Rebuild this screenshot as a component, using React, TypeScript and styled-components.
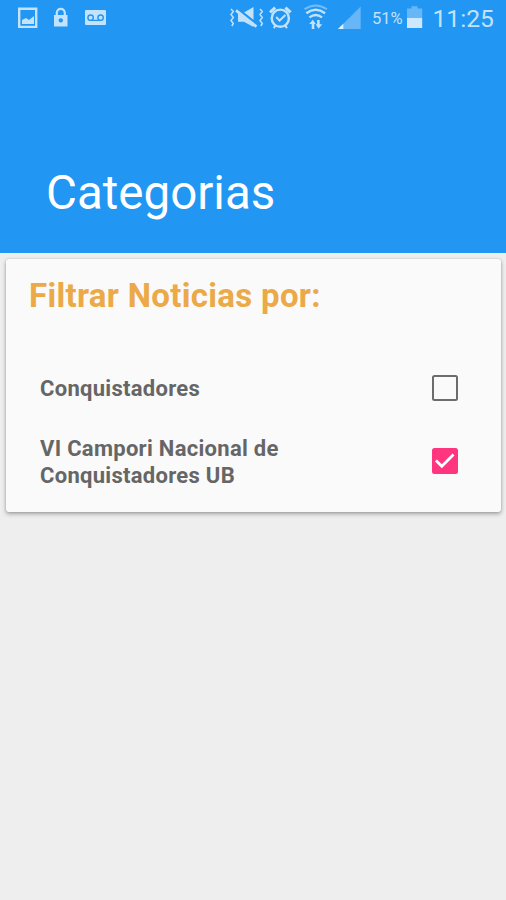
import React, { useState } from "react";
import styled, { createGlobalStyle } from "styled-components";

const GlobalStyle = createGlobalStyle`
  * { box-sizing: border-box; }
  body { margin: 0; background: #eeeeee; font-family: Roboto, sans-serif; }
`;

const Screen = styled.main`
  min-height: 900px;
  background: #eeeeee;
  overflow: hidden;
`;

const Header = styled.header`
  height: 253px;
  background: #2196f3;
  display: flex;
  flex-direction: column;
  justify-content: space-between;
`;

const StatusBar = styled.div`
  height: 36px;
  display: flex;
  color: #c3e2fb;
`;

const StatusIcon = styled.svg<{ $gap?: number }>`
  flex: none;
  height: 36px;
  margin-left: ${(p) => p.$gap ?? 0}px;
  fill: none;
  stroke: currentColor;
  stroke-width: 2;
`;

const Battery = styled.span`
  width: 32px;
  margin-left: 10px;
  font-size: 16.5px;
  line-height: 38px;
  white-space: nowrap;
`;

const Clock = styled.time`
  margin-left: 8.5px;
  font-size: 24.7px;
  line-height: 38px;
  white-space: nowrap;
`;

const Title = styled.h1`
  margin: 0 0 32px 46px;
  font-size: 47.5px;
  font-weight: 400;
  line-height: 56px;
  color: #ffffff;
`;

const Card = styled.section`
  height: 253px;
  margin: 6px 5px 0 6px;
  padding: 17px 43px 0 23px;
  border-radius: 3px;
  background: #fafafa;
  box-shadow: 0 2px 4px rgba(0, 0, 0, 0.32), 0 0 2px rgba(0, 0, 0, 0.16);
`;

const CardTitle = styled.h2`
  margin: 0 0 35px;
  font-size: 33px;
  font-weight: 700;
  line-height: 40px;
  letter-spacing: 0.31px;
  color: #eba947;
`;

const Row = styled.label`
  display: flex;
  align-items: center;
  justify-content: space-between;
  height: 73.5px;
  padding-left: 11px;
`;

const RowText = styled.span`
  width: 260px;
  padding-top: 2px;
  font-size: 22px;
  font-weight: 700;
  line-height: 27px;
  letter-spacing: 0.29px;
  color: #666666;
`;

const HiddenInput = styled.input`
  appearance: none;
  width: 0;
  height: 0;
  margin: 0;
`;

const Box = styled.span<{ $checked: boolean }>`
  display: flex;
  width: 26px;
  height: 26px;
  border: ${(p) => (p.$checked ? "0" : "2.5px solid #6c6c6c")};
  border-radius: 2.5px;
  background: ${(p) => (p.$checked ? "#ff3580" : "transparent")};
`;

function Category({ label, initial }: { label: string; initial: boolean }) {
  const [checked, setChecked] = useState(initial);
  return (
    <Row>
      <RowText>{label}</RowText>
      <HiddenInput type="checkbox" checked={checked} onChange={() => setChecked(!checked)} />
      <Box $checked={checked}>
        {checked && (
          <svg width="26" height="26" viewBox="0 0 26 26" fill="none" stroke="#fff" strokeWidth="2.8">
            <path d="M4 12.5 L9.8 18.3 L21.5 6.6" />
          </svg>
        )}
      </Box>
    </Row>
  );
}

export default function App() {
  return (
    <Screen>
      <GlobalStyle />
      <Header>
        <StatusBar>
          <StatusIcon $gap={17} width="22" viewBox="17 0 22 36">
            <path d="M19.2 8.7h17v18.2h-17z" strokeWidth="2.4" />
            <path d="M22 24v-4l4-2 3 2 5-4v8z" fill="currentColor" stroke="none" />
          </StatusIcon>
          <StatusIcon $gap={14} width="16" viewBox="53 0 16 36">
            <path d="M56.8 16v-3.2a4 4 0 0 1 8 0V16" strokeWidth="2.2" />
            <path d="M54 15h13.5v11.5H54zM60.8 18.2a2.2 2.2 0 1 0 .01 0z" fill="currentColor" fillRule="evenodd" stroke="none" />
          </StatusIcon>
          <StatusIcon $gap={15} width="23" viewBox="84 0 23 36">
            <rect x="85" y="10" width="21" height="15" rx="1" fill="currentColor" stroke="none" />
            <g stroke="#2196f3" strokeWidth="1.4">
              <circle cx="90.6" cy="17.7" r="2.7" />
              <circle cx="100.6" cy="17.7" r="2.7" />
              <path d="M90.6 20.4h10" strokeWidth="1.3" />
            </g>
          </StatusIcon>
          <StatusIcon $gap={122} width="36" viewBox="229 0 36 36">
            <path d="M238 12.5h6l9.5-5.5v20l-9.5-5.2h-6z" fill="currentColor" stroke="none" />
            <path d="M236.5 9.2l20.5 16.2" stroke="#2196f3" strokeWidth="4.6" />
            <path d="M236 10.4l20.5 16.2" strokeWidth="2.7" />
            <path d="M231 9l2.3 2.5-2.3 3 2.3 3-2.3 3 2.3 3-1.5 2.5M260 9l2.3 2.5-2.3 3 2.3 3-2.3 3 2.3 3-1.5 2.5" strokeWidth="1.5" />
          </StatusIcon>
          <StatusIcon $gap={3} width="26" viewBox="268 0 26 36">
            <circle cx="280.3" cy="18.2" r="8.6" strokeWidth="2.4" />
            <path d="M270 12.3l5.2-4.7M285.4 7.6l5.2 4.7" strokeWidth="3" />
            <path d="M275.7 25.4l-2 2.7M285 25.4l2 2.7" />
            <path d="M276.2 17l3.4 3.6 5.8-5.5" />
          </StatusIcon>
          <StatusIcon $gap={8} width="28" viewBox="302 0 28 36">
            <path d="M304.5 9.2q11.2-7.4 22.4 0" opacity=".5" />
            <path d="M306.3 13.2q9.4-6.7 18.8 0" strokeWidth="2.4" />
            <path d="M309.4 17.4q6.3-4.6 12.6 0" strokeWidth="2.4" />
            <path d="M313 29v-6.3M318.4 20v6.3" strokeWidth="2.6" />
            <path d="M309.2 24l3.6-4.3 3 4.3zM315.6 24.2l3 4.5 3.6-4.5z" fill="currentColor" stroke="none" />
          </StatusIcon>
          <StatusIcon $gap={7} width="25" viewBox="337 0 25 36">
            <path d="M338 29l22.7-22.5V29z" fill="#67b6f7" stroke="none" />
            <path d="M338 29l5.3-5.3V29z" fill="#e3f2fd" stroke="none" />
          </StatusIcon>
          <Battery>51%</Battery>
          <StatusIcon $gap={2} width="18" viewBox="406 0 18 36">
            <path d="M407 8.5h4.5V6.2h6v2.3h4.7V18H407z" fill="#67b6f7" stroke="none" />
            <path d="M407 18h15.2v10H407z" fill="#cde7fc" stroke="none" />
          </StatusIcon>
          <Clock>11:25</Clock>
        </StatusBar>
        <Title>Categorias</Title>
      </Header>
      <Card>
        <CardTitle>Filtrar Noticias por:</CardTitle>
        <Category label="Conquistadores" initial={false} />
        <Category label="VI Campori Nacional de Conquistadores UB" initial={true} />
      </Card>
    </Screen>
  );
}
